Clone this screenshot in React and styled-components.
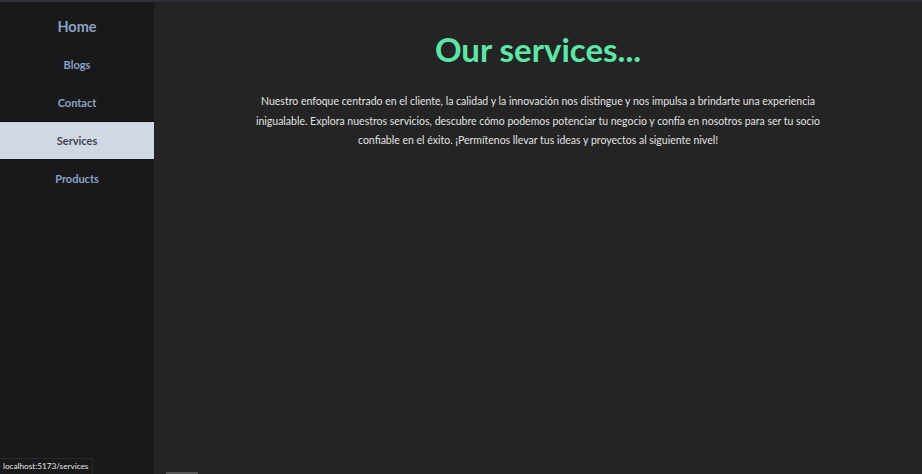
import React from 'react';
import styled, { createGlobalStyle } from 'styled-components';

const GlobalStyle = createGlobalStyle`
  html, body {
    margin: 0;
    padding: 0;
    height: 100%;
    background: #242424;
    font-family: Lato, "Open Sans", sans-serif;
  }
  #root {
    height: 100%;
  }
`;

const Layout = styled.div`
  display: flex;
  height: 100vh;
  border-top: 2px solid #2f2f3a;
  box-sizing: border-box;
`;

const Sidebar = styled.nav`
  width: 154px;
  flex-shrink: 0;
  background: #19191b;
  display: flex;
  flex-direction: column;
  padding-top: 5px;
`;

const NavItem = styled.a`
  display: flex;
  align-items: center;
  justify-content: center;
  height: 38px;
  box-sizing: border-box;
  font-size: ${p => (p.$home ? 14.5 : 11)}px;
  font-weight: 700;
  color: ${p => (p.$active ? '#3e4654' : '#8aa3c4')};
  background: ${p => (p.$active ? '#cfd8e3' : 'transparent')};
  border-top: 1px solid ${p => (p.$active ? '#0d0d0e' : 'transparent')};
  text-decoration: none;
  cursor: pointer;
`;

const Main = styled.main`
  flex: 1;
  display: flex;
  flex-direction: column;
  align-items: center;
  padding-top: 27px;
`;

const Title = styled.h1`
  margin: 0;
  font-size: 33px;
  font-weight: 700;
  color: #5ce6a9;
`;

const Intro = styled.p`
  margin: 23px 0 0;
  width: 574px;
  text-align: center;
  font-size: 10.5px;
  line-height: 19.5px;
  color: #e2e2e2;
`;

const StatusTip = styled.div`
  position: fixed;
  left: 0;
  bottom: 0;
  padding: 2px 4px 2px 3px;
  background: #19191b;
  border-top: 1px solid #2a2a2e;
  border-right: 1px solid #2a2a2e;
  color: #e6e6e6;
  font-size: 8.2px;
  line-height: 11px;
`;

const ScrollThumb = styled.div`
  position: fixed;
  left: 166px;
  bottom: 0;
  width: 32px;
  height: 2px;
  background: #555;
`;

const links = ['Blogs', 'Contact', 'Services', 'Products'];

export default function App() {
  return (
    <>
      <GlobalStyle />
      <Layout>
        <Sidebar>
          <NavItem $home>Home</NavItem>
          {links.map(l => (
            <NavItem key={l} $active={l === 'Services'}>{l}</NavItem>
          ))}
        </Sidebar>
        <Main>
          <Title>Our services...</Title>
          <Intro>
            Nuestro enfoque centrado en el cliente, la calidad y la innovación nos distingue y nos impulsa a brindarte una experiencia inigualable. Explora nuestros servicios, descubre cómo podemos potenciar tu negocio y confía en nosotros para ser tu socio confiable en el éxito. ¡Permítenos llevar tus ideas y proyectos al siguiente nivel!
          </Intro>
        </Main>
      </Layout>
      <StatusTip>localhost:5173/services</StatusTip>
      <ScrollThumb />
    </>
  );
}
